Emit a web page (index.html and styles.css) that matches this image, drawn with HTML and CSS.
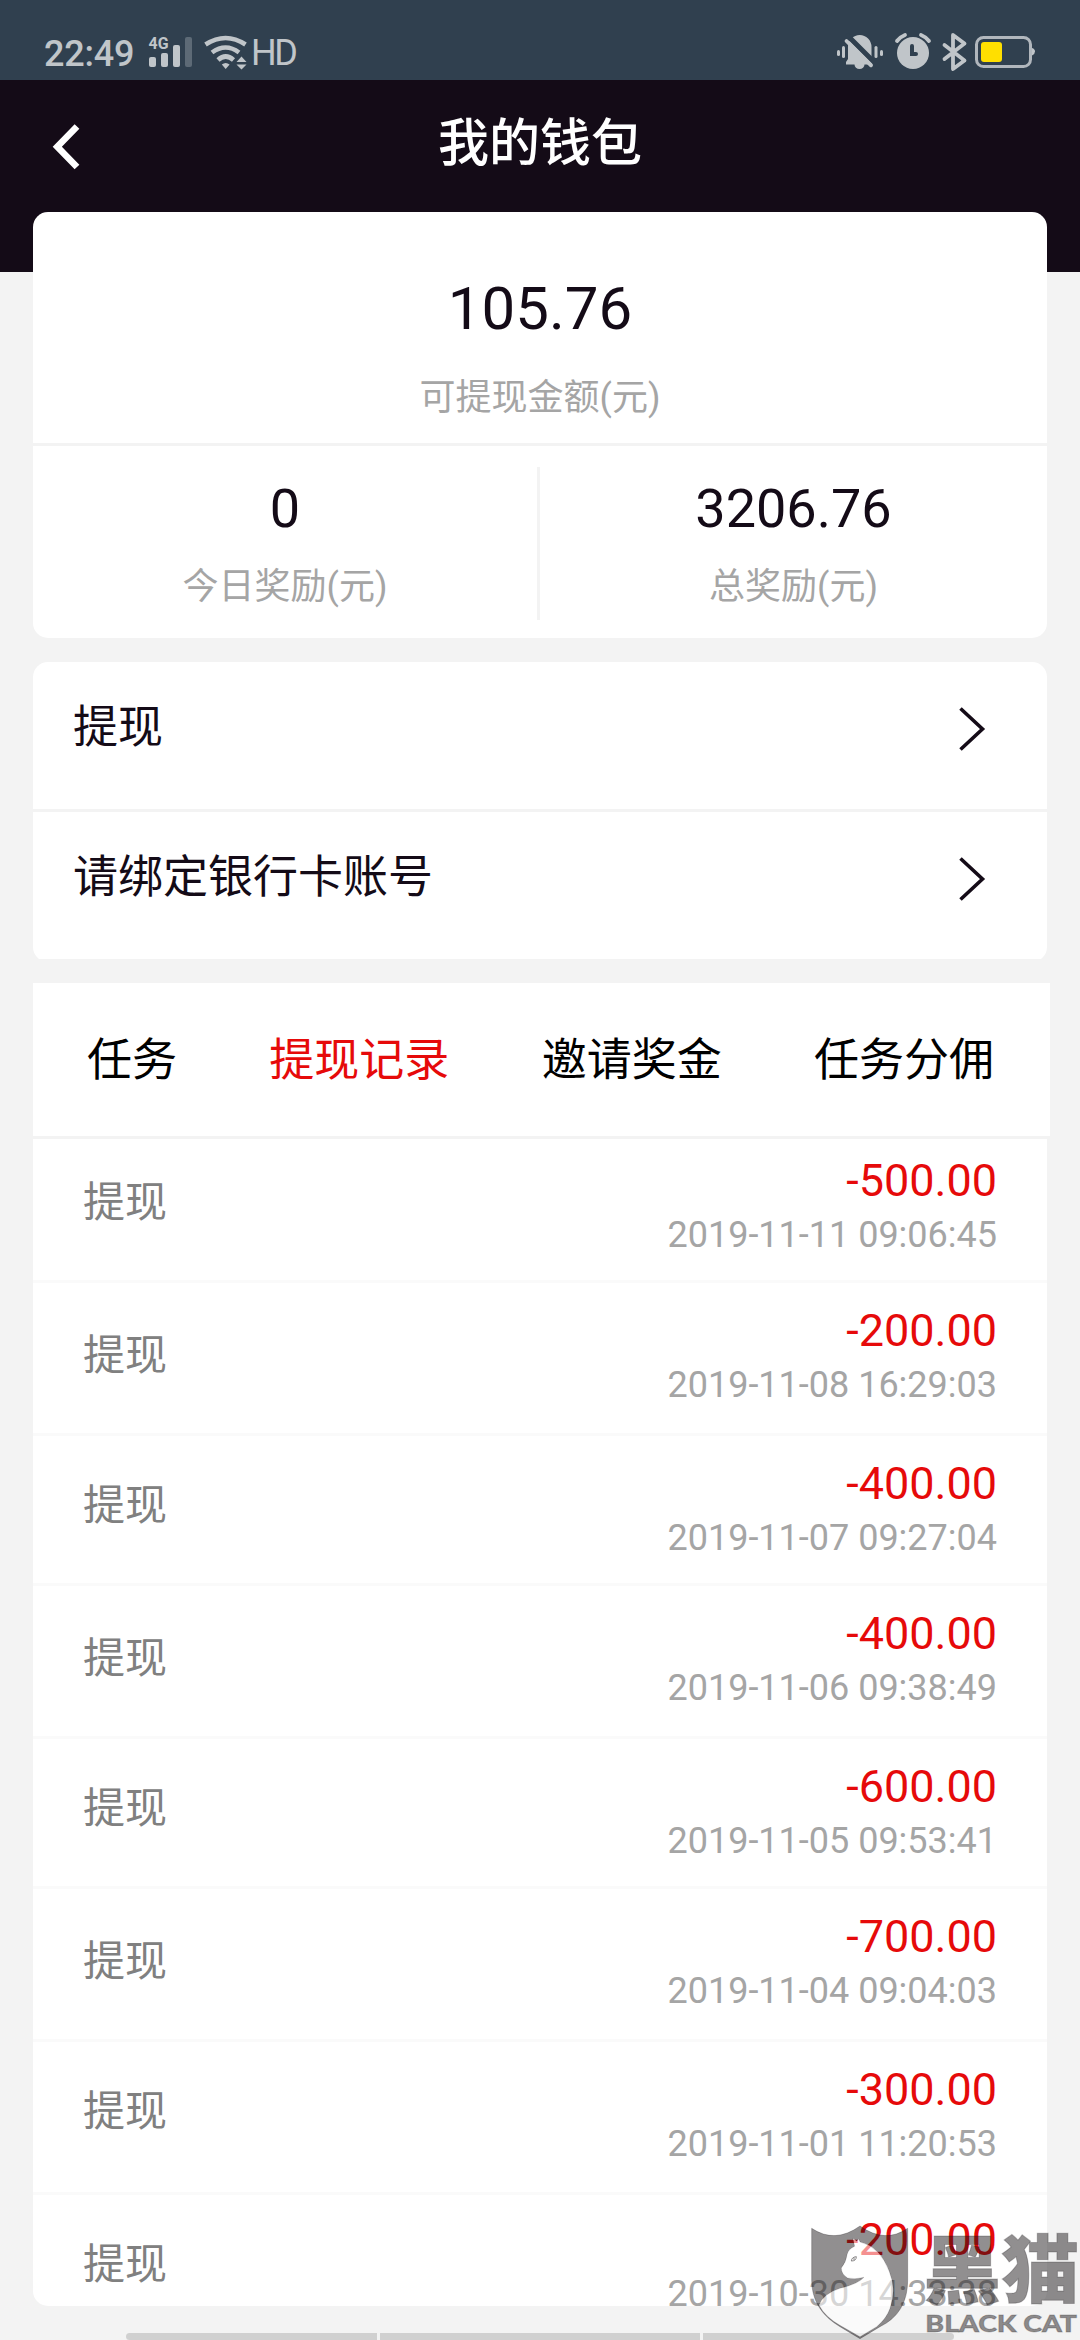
FILE: index.html
```html
<!DOCTYPE html>
<html lang="zh-CN">
<head>
    <meta charset="UTF-8">
    <meta name="viewport" content="width=device-width, initial-scale=1.0">
    <title>我的钱包</title>
    <link rel="stylesheet" href="styles.css">
</head>
<body>
    <div class="page">
        <!-- 状态栏 -->
        <div class="status-bar">
            <div class="status-left">
                <span class="time">22:49</span>
                <svg class="signal" width="44" height="34" viewBox="148 34 44 34">
                    <text class="net" x="148.5" y="49" textLength="20" lengthAdjust="spacingAndGlyphs">4G</text>
                    <rect x="149" y="57" width="7" height="10" rx="2"/>
                    <rect x="161" y="53" width="7" height="14" rx="2"/>
                    <rect x="173" y="45" width="7" height="22" rx="2"/>
                    <rect class="faint" x="185" y="37" width="7" height="30" rx="2"/>
                </svg>
                <svg class="wifi" width="44" height="36" viewBox="204 35 44 36">
                    <path class="line" d="M205.500 44.500Q225.700 31.500 245.500 44.500M212 52.500Q225.700 42.500 239 52.500M218 60Q225.700 53 233.500 60"/>
                    <path d="M221.800 64.500Q225.700 61.500 229.600 64.500L225.700 69ZM236.500 62L241.500 56.500L246.500 62ZM236.500 64.500H246.500L241.500 69.500Z"/>
                </svg>
                <span class="hd">HD</span>
            </div>
            <svg class="status-right" width="202" height="42" viewBox="836 31 202 42">
                <!-- 静音 -->
                <rect x="837" y="50" width="3" height="6" rx="1.500"/>
                <rect x="842" y="46" width="3" height="12" rx="1.500"/>
                <rect x="874.500" y="46" width="3" height="12" rx="1.500"/>
                <rect x="880" y="50" width="3" height="6" rx="1.500"/>
                <path d="M846 64.500V62L848 59V47A11.700 12 0 0 1 871.500 47V59L873 64.500H864.500A5 4.500 0 0 1 854.500 64.500Z"/>
                <path class="cut" d="M848 36L877 65"/>
                <path class="slash" d="M846.500 41L871 65.300"/>
                <!-- 闹钟 -->
                <circle cx="913" cy="53" r="16"/>
                <path class="ear" d="M897 41Q900 37 905 35M921 35Q926 37 929 41"/>
                <path class="hand" d="M912 46V54H916"/>
                <!-- 蓝牙 -->
                <path class="bt" d="M944.500 45L964.500 60.500L953 69V35L964.500 43.500L944.500 59"/>
                <!-- 电池 -->
                <rect class="cell" x="976.500" y="37.500" width="54" height="29" rx="7"/>
                <path d="M1032 48Q1035 49 1035 51.500Q1035 54 1032 55.500Z"/>
                <rect class="charge" x="981" y="42" width="21" height="20" rx="3"/>
            </svg>
        </div>

        <header class="header">
            <svg class="back" width="30" height="50" viewBox="50 122 30 50">
                <path d="M77 126.500L57.300 146.700L77 167"/>
            </svg>
            <h1>我的钱包</h1>
        </header>

        <!-- 余额 -->
        <section class="card wallet">
            <div class="balance">
                <div class="balance-num">105.76</div>
                <div class="caption">可提现金额(元)</div>
            </div>
            <div class="stats">
                <div class="stat">
                    <div class="stat-num">0</div>
                    <div class="caption">今日奖励(元)</div>
                </div>
                <div class="stat-line"></div>
                <div class="stat">
                    <div class="stat-num">3206.76</div>
                    <div class="caption">总奖励(元)</div>
                </div>
            </div>
        </section>

        <!-- 菜单 -->
        <div class="menu-wrap">
            <nav class="card menu">
                <a class="menu-item">
                    <span>提现</span>
                    <svg class="arrow" width="30" height="50" viewBox="0 0 30 50"><path d="M3.500 4.500L25.500 25L3.500 45.500"/></svg>
                </a>
                <a class="menu-item">
                    <span>请绑定银行卡账号</span>
                    <svg class="arrow" width="30" height="50" viewBox="0 0 30 50"><path d="M3.500 4.500L25.500 25L3.500 45.500"/></svg>
                </a>
            </nav>
        </div>

        <!-- 记录 -->
        <div class="tabs">
            <span>任务</span>
            <span class="active">提现记录</span>
            <span>邀请奖金</span>
            <span>任务分佣</span>
        </div>
        <ul class="records">
            <li class="first">
                <span class="name">提现</span>
                <div class="info"><div class="amount">-500.00</div><div class="date">2019-11-11 09:06:45</div></div>
            </li>
            <li class="tall">
                <span class="name">提现</span>
                <div class="info"><div class="amount">-200.00</div><div class="date">2019-11-08 16:29:03</div></div>
            </li>
            <li>
                <span class="name">提现</span>
                <div class="info"><div class="amount">-400.00</div><div class="date">2019-11-07 09:27:04</div></div>
            </li>
            <li class="tall">
                <span class="name">提现</span>
                <div class="info"><div class="amount">-400.00</div><div class="date">2019-11-06 09:38:49</div></div>
            </li>
            <li>
                <span class="name">提现</span>
                <div class="info"><div class="amount">-600.00</div><div class="date">2019-11-05 09:53:41</div></div>
            </li>
            <li class="tall">
                <span class="name">提现</span>
                <div class="info"><div class="amount">-700.00</div><div class="date">2019-11-04 09:04:03</div></div>
            </li>
            <li class="seventh">
                <span class="name">提现</span>
                <div class="info"><div class="amount">-300.00</div><div class="date">2019-11-01 11:20:53</div></div>
            </li>
            <li class="last">
                <span class="name">提现</span>
                <div class="info"><div class="amount">-200.00</div><div class="date">2019-10-30 14:33:38</div></div>
            </li>
        </ul>

        <div class="bottom-bar"><i></i><i></i><i></i></div>

        <!-- 水印 -->
        <svg class="watermark" width="300" height="160" viewBox="0 0 900 480">
            <path class="shade" fill-rule="evenodd" d="M95 145Q165 192 240 138Q315 192 383 145V300Q383 400 300 440L240 476L180 440Q95 390 95 300ZM219 175L224 199Q204 208 201 225Q199 245 184 264Q184 282 203 294Q225 299 252 292Q235 312 180 325Q132 340 117 375Q135 410 180 436L240 470L290 440Q320 415 330 385Q350 330 328 275Q300 200 240 186L236 177L230 184Z"/>
            <path class="light" d="M219 175L224 199Q204 208 201 225Q199 245 184 264Q184 282 203 294Q225 299 252 292Q235 312 180 325Q132 340 117 375Q135 410 180 436L240 470L290 440Q320 415 330 385Q350 330 328 275Q300 200 240 186L236 177L230 184Z"/>
            <path class="eye" d="M214 243Q215 231 229 230Q229 243 214 243M222 232V241"/>
            <text class="mark-cn" x="430" y="350" textLength="468" lengthAdjust="spacingAndGlyphs">黑猫</text>
            <text class="mark-en" x="436" y="457" textLength="455" lengthAdjust="spacingAndGlyphs">BLACK CAT</text>
        </svg>
    </div>
</body>
</html>
```

FILE: styles.css
```css
* {
    box-sizing: border-box;
}
body {
    margin: 0;
    background: #f3f3f3;
    color: #140b17;
    font-family: Roboto, "Noto Sans CJK SC", sans-serif;
}
.page {
    position: relative;
    display: flex;
    flex-direction: column;
    width: 1080px;
    height: 2340px;
    overflow: hidden;
}
.status-bar {
    display: flex;
    justify-content: space-between;
    flex: none;
    height: 80px;
    padding: 31px 42px 0 44px;
    background: #30404f;
    color: #c0c5c9;
}
.status-bar svg {
    flex: none;
    fill: #c0c5c9;
}
.status-left {
    display: flex;
}
.time {
    width: 104px;
    font-size: 36px;
    font-weight: 500;
    line-height: 47px;
    letter-spacing: -0.2px;
}
.signal {
    margin: 3px 12px 0 0;
}
.net {
    font-size: 17px;
    font-weight: 700;
}
.faint {
    fill: #5d6a76;
}
.wifi {
    margin: 4px 3px 0 0;
}
.wifi .line {
    fill: none;
    stroke: #c0c5c9;
    stroke-width: 4.6;
}
.hd {
    font-size: 36px;
    line-height: 45px;
    letter-spacing: -2.5px;
}
.status-right .cut,
.status-right .hand {
    fill: none;
    stroke: #30404f;
    stroke-width: 4;
    stroke-linecap: round;
}
.status-right .cut {
    stroke-width: 5;
}
.status-right .slash,
.status-right .ear,
.status-right .bt {
    fill: none;
    stroke: #c0c5c9;
    stroke-width: 3.8;
    stroke-linecap: round;
    stroke-linejoin: round;
}
.status-right .cell {
    fill: none;
    stroke: #b1b7bd;
    stroke-width: 3;
}
.status-right .charge {
    fill: #ffdf00;
}
.header {
    display: flex;
    flex: none;
    height: 192px;
    padding: 0 50px;
    background: #140b17;
    color: #fff;
}
.back {
    margin-top: 42px;
    fill: none;
    stroke: #fff;
    stroke-width: 6.6;
}
.header h1 {
    flex: 1;
    margin: 34px 30px 0 0;
    font-size: 51px;
    font-weight: 500;
    line-height: 60px;
    text-align: center;
}
.card {
    border-radius: 15px;
    background: #fff;
}
.wallet {
    flex: none;
    height: 426px;
    margin: -60px 33px 24px;
    text-align: center;
}
.balance {
    height: 234px;
    padding-top: 61px;
    border-bottom: 3px solid #f3f3f3;
}
.balance-num {
    margin-bottom: 29px;
    font-size: 60px;
    line-height: 72px;
}
.caption {
    color: #a5a5a5;
    font-size: 36px;
    line-height: 48px;
}
.stats {
    display: flex;
}
.stat {
    flex: 1;
    padding-top: 30px;
}
.stat:first-child {
    flex: 0 0 504px;
}
.stat-line {
    width: 3px;
    height: 153px;
    margin-top: 21px;
    background: #f3f3f3;
}
.stat-num {
    margin-bottom: 21px;
    font-size: 54px;
    line-height: 66px;
}
.menu-wrap {
    flex: none;
    height: 297px;
    margin: 0 33px 24px;
    overflow: hidden;
}
.menu-item {
    display: flex;
    justify-content: space-between;
    height: 150px;
    padding: 36px 60px 0 40px;
    font-size: 45px;
    line-height: 60px;
}
.menu-item:first-child {
    border-bottom: 3px solid #f3f3f3;
}
.arrow {
    margin-top: 6px;
    fill: none;
    stroke: #140b17;
    stroke-width: 3.6;
}
.tabs {
    display: flex;
    flex: none;
    justify-content: space-between;
    width: 1017px;
    height: 153px;
    margin: 0 0 3px 33px;
    padding: 48px 56px 0 54px;
    background: #fff;
    color: #000;
    font-size: 45px;
    line-height: 60px;
}
.tabs .active {
    color: #e60a0a;
}
.records {
    flex: none;
    height: 1167px;
    margin: 0 33px;
    padding: 0;
    border-radius: 0 0 15px 15px;
    background: #fff;
    list-style: none;
    overflow: hidden;
}
.records li {
    display: flex;
    justify-content: space-between;
    height: 150px;
    padding: 0 50px;
    border-bottom: 3px solid #fafafa;
}
.records .name {
    margin-top: 40px;
    color: #808080;
    font-size: 42px;
    line-height: 60px;
}
.info {
    padding-top: 21px;
    text-align: right;
}
.amount {
    margin-bottom: 3px;
    color: #e60a0a;
    font-size: 45px;
    line-height: 54px;
}
.date {
    color: #a5a5a5;
    font-size: 36px;
    line-height: 48px;
}
.records .tall,
.records .seventh {
    height: 153px;
}
.records .tall .name {
    margin-top: 43px;
}
.records .first {
    height: 144px;
}
.records .first .name {
    margin-top: 34px;
}
.first .info {
    padding-top: 15px;
}
.last .info {
    padding-top: 18px;
}
.bottom-bar {
    display: flex;
    flex: none;
    gap: 3px;
    height: 7px;
    margin: 27px 126px 0;
    border-radius: 4px;
    overflow: hidden;
}
.bottom-bar i {
    flex: 0 0 251px;
    background: #d0d0d0;
}
.bottom-bar i:nth-child(2) {
    flex-basis: 320px;
}
.watermark {
    position: absolute;
    right: 0;
    bottom: 0;
}
.watermark .shade,
.watermark text {
    fill: rgba(25, 20, 22, 0.48);
    stroke: rgba(25, 20, 22, 0.25);
    stroke-width: 3;
}
.watermark .light {
    fill: rgba(255, 255, 255, 0.55);
}
.watermark .eye {
    fill: none;
    stroke: #8a8889;
    stroke-width: 3;
}
.watermark .mark-cn {
    font-family: "Noto Sans CJK SC", sans-serif;
    font-size: 222px;
    font-weight: 900;
}
.watermark .mark-en {
    font-family: Lato, sans-serif;
    font-size: 69px;
    font-weight: 900;
}
```
